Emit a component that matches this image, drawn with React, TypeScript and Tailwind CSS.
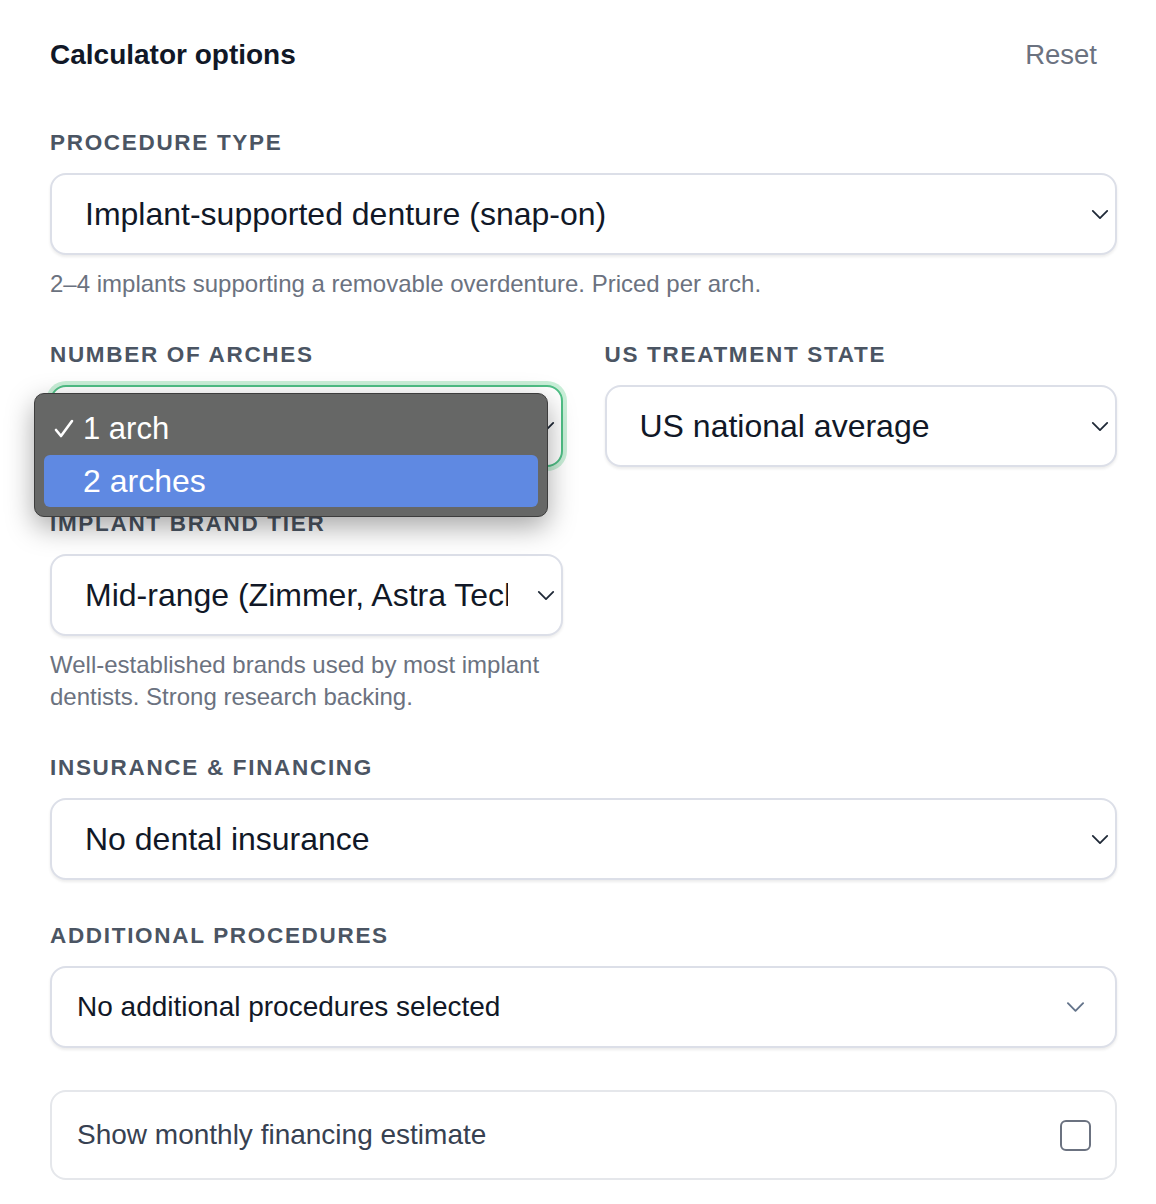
import React from 'react';

const font = { fontFamily: '"Liberation Sans", Arial, sans-serif' };

const Chevron: React.FC<{ className?: string }> = ({ className }) => (
    <svg viewBox="0 0 20 12" className={className} fill="none" stroke="currentColor" strokeWidth={2} strokeLinecap="round" strokeLinejoin="round">
        <path d="M2 2l8 8 8-8" />
    </svg>
);

const Label: React.FC<{ children: React.ReactNode }> = ({ children }) => (
    <p className="text-[22.5px] leading-[26px] font-bold uppercase tracking-[0.075em] text-[#4b5563] mb-[17px]">{children}</p>
);

const SelectBox: React.FC<{ value: string; focused?: boolean; clip?: boolean }> = ({ value, focused, clip }) => (
    <div
        className={
            focused
                ? 'h-[82px] rounded-[16px] border-2 border-[#4fbf86] ring-4 ring-[#c9efd8] bg-white flex items-center pl-[33px] pr-[6px]'
                : 'h-[82px] rounded-[16px] border-2 border-[#dcdfe8] shadow-[0_2px_3px_rgba(0,0,0,0.08)] bg-white flex items-center pl-[33px] pr-[6px]'
        }
    >
        <span className={clip ? 'w-[423px] shrink-0 text-[32px] text-[#111827] whitespace-nowrap overflow-hidden' : 'text-[32px] text-[#111827] whitespace-nowrap'}>
            {value}
        </span>
        <Chevron className="w-[18px] h-[11px] text-[#1f2937] ml-auto" />
    </div>
);

const Helper: React.FC<{ children: React.ReactNode }> = ({ children }) => (
    <p className="mt-[13px] text-[24px] leading-[32px] text-[#6b7280]">{children}</p>
);

export default function App() {
    return (
        <div style={font} className="w-[1156px] min-h-[1204px] bg-white pl-[50px] pr-[39px] pt-[39px] pb-[24px] flex flex-col">
            <div className="flex items-center justify-between">
                <h2 className="text-[28px] leading-[32px] font-bold text-[#111827]">Calculator options</h2>
                <button className="text-[27.5px] leading-[32px] text-[#6b7280] mr-[20px]">Reset</button>
            </div>

            <div className="mt-[59px]">
                <Label>Procedure type</Label>
                <SelectBox value="Implant-supported denture (snap-on)" />
                <Helper>2–4 implants supporting a removable overdenture. Priced per arch.</Helper>
            </div>

            <div className="mt-[42px] grid grid-cols-2 gap-x-[42px]">
                <div>
                    <Label>Number of arches</Label>
                    <div className="relative">
                        <SelectBox value="1 arch" focused />
                        {/* native option list, open */}
                        <div className="absolute left-[-16px] top-[8px] w-[514px] z-10 rounded-[10px] bg-[#666766] border border-[#3d3d3d] shadow-[0_10px_28px_rgba(0,0,0,0.35)] p-[9px] text-white text-[31px]">
                            <div className="h-[52px] flex items-center pl-[10px]">
                                <svg viewBox="0 0 20 20" className="w-[20px] h-[20px] mr-[9px]" fill="none" stroke="currentColor" strokeWidth={2.6} strokeLinecap="round" strokeLinejoin="round">
                                    <path d="M2 11l5 6L18 2" />
                                </svg>
                                <span>1 arch</span>
                            </div>
                            <div className="h-[52px] flex items-center pl-[39px] rounded-[6px] bg-[#5f89e2] text-[32px]">
                                <span>2 arches</span>
                            </div>
                        </div>
                    </div>
                    <div className="mt-[44px]">
                        <Label>Implant brand tier</Label>
                        <SelectBox value="Mid-range (Zimmer, Astra Tech)" clip />
                        <Helper>Well-established brands used by most implant dentists. Strong research backing.</Helper>
                    </div>
                </div>
                <div>
                    <Label>US treatment state</Label>
                    <SelectBox value="US national average" />
                </div>
            </div>

            <div className="mt-[42px]">
                <Label>Insurance &amp; financing</Label>
                <SelectBox value="No dental insurance" />
            </div>

            <div className="mt-[43px]">
                <Label>Additional procedures</Label>
                <div className="h-[82px] rounded-[16px] border-2 border-[#dcdfe8] shadow-[0_2px_3px_rgba(0,0,0,0.08)] bg-white flex items-center pl-[25px] pr-[30px]">
                    <span className="flex-1 text-[28px] text-[#111827]">No additional procedures selected</span>
                    <Chevron className="w-[19px] h-[12px] text-[#64748b]" />
                </div>
            </div>

            <div className="mt-[42px] h-[90px] rounded-[16px] border-2 border-[#e5e7eb] bg-white flex items-center pl-[25px] pr-[24px]">
                <span className="flex-1 text-[28px] text-[#374151]">Show monthly financing estimate</span>
                <span className="w-[31px] h-[31px] rounded-[6px] border-2 border-[#6b7280] bg-white" />
            </div>
        </div>
    );
}
